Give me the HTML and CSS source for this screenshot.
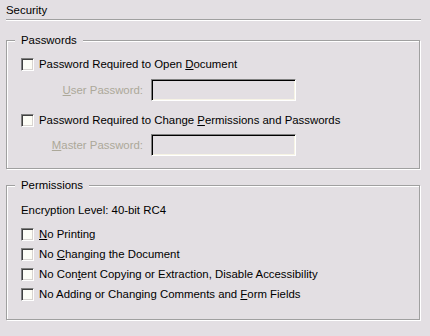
FILE: index.html
```html
<!DOCTYPE html>
<html lang="en">
<head>
    <meta charset="UTF-8">
    <title>Security</title>
    <link rel="stylesheet" href="styles.css">
</head>
<body>
    <div class="panel">
        <div class="title">Security</div>
        <div class="separator"></div>

        <fieldset class="group passwords">
            <legend>Passwords</legend>
            <label class="check-row">
                <span class="check"></span>
                <span>Password Required to Open <u>D</u>ocument</span>
            </label>
            <div class="field-row first">
                <span class="field-label"><u>U</u>ser Password:</span>
                <span class="field"></span>
            </div>
            <label class="check-row second">
                <span class="check"></span>
                <span>Password Required to Change <u>P</u>ermissions and Passwords</span>
            </label>
            <div class="field-row">
                <span class="field-label"><u>M</u>aster Password:</span>
                <span class="field"></span>
            </div>
        </fieldset>

        <fieldset class="group permissions">
            <legend>Permissions</legend>
            <div class="level">Encryption Level: 40-bit RC4</div>
            <label class="check-row">
                <span class="check"></span>
                <span><u>N</u>o Printing</span>
            </label>
            <label class="check-row">
                <span class="check"></span>
                <span>No <u>C</u>hanging the Document</span>
            </label>
            <label class="check-row">
                <span class="check"></span>
                <span>No Con<u>t</u>ent Copying or Extraction, Disable Accessibility</span>
            </label>
            <label class="check-row">
                <span class="check"></span>
                <span>No Adding or Changing Comments and <u>F</u>orm Fields</span>
            </label>
        </fieldset>
    </div>
</body>
</html>
```

FILE: styles.css
```css
body {
    margin: 0;
    background-color: #e3dfe3;
    font-family: "Liberation Sans", Arial, sans-serif;
    font-size: 11.4px;
    color: #000;
}
.panel {
    width: 430px;
    height: 336px;
    overflow: hidden;
}
.title {
    height: 13px;
    line-height: 13px;
    margin: 4px 0 0 6px;
}
.separator {
    height: 1px;
    margin: 2px 9px 0 6px;
    background-color: #a0a0a0;
    box-shadow: 0 1px 0 #fff;
}
.group {
    margin: 0 10px 0 6px;
    border: 1px solid #a0a0a0;
    box-shadow: 1px 1px 0 #fff, inset 1px 1px 0 #fff;
    padding: 0 0 0 14px;
}
.group legend {
    margin-left: -6px;
    padding: 0 6px;
    height: 13px;
    line-height: 13px;
    background-color: #e3dfe3;
}
.passwords {
    margin-top: 14px;
    padding-top: 7px;
    padding-bottom: 12px;
}
.permissions {
    margin-top: 10px;
    padding-top: 8px;
    padding-bottom: 15px;
}
.check-row {
    display: flex;
    align-items: center;
    gap: 5px;
    height: 20px;
}
.check-row.second {
    margin-top: 9px;
}
.check {
    width: 11px;
    height: 11px;
    border: 1px solid;
    border-color: #808080 #fff #fff #808080;
    background-color: #fdfdf6;
    box-shadow: inset 1px 1px 0 #404040, inset -1px -1px 0 #d8d4d0;
}
.field-row {
    display: flex;
    align-items: center;
    height: 22px;
    margin-top: 5px;
}
.field-row + .check-row {
    margin-top: 9px;
}
.field-row:last-child {
    margin-top: 4px;
}
.field-label {
    width: 122px;
    margin-right: 8px;
    text-align: right;
    color: #aca899;
}
.field {
    width: 143px;
    height: 20px;
    border: 1px solid;
    border-color: #808080 #fff #fff #808080;
    box-shadow: inset 1px 1px 0 #000, inset -1px -1px 0 #f6f3e4;
}
.level {
    height: 20px;
    line-height: 20px;
    margin-bottom: 4px;
}
```
